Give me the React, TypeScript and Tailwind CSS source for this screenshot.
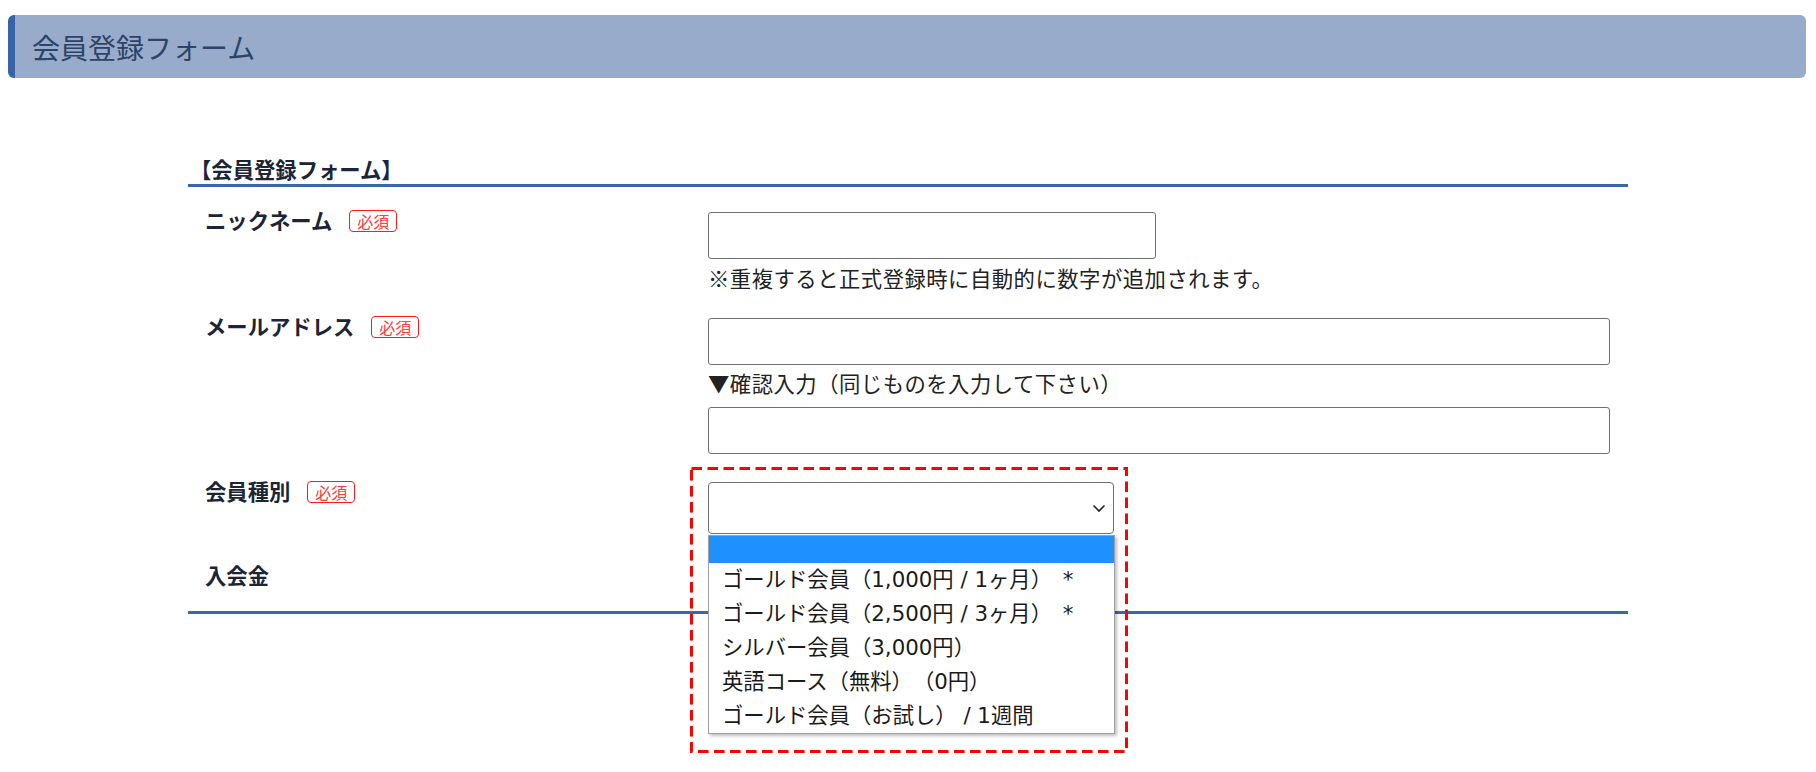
import React from 'react';

// Membership plans shown in the open select list
const plans = [
  'ゴールド会員（1,000円 / 1ヶ月）\u2002*',
  'ゴールド会員（2,500円 / 3ヶ月）\u2002*',
  'シルバー会員（3,000円）',
  '英語コース（無料）（0円）',
  'ゴールド会員（お試し） / 1週間',
];

const Required: React.FC = () => (
  <span className="ml-[17px] inline-flex h-[22px] translate-y-[1px] items-center rounded-[4px] border-[1.5px] border-[#ff1a1a] px-[7px] text-[16px] font-normal leading-none text-[#ff3b3b]">
    必須
  </span>
);

const Label: React.FC<{ text: string; required?: boolean }> = ({ text, required }) => (
  <div className="-mt-[3px] flex w-[520px] shrink-0 items-center self-start pl-[17px]">
    <span className="text-[21.33px] font-bold leading-[18px] text-[#1b2537]">{text}</span>
    {required && <Required />}
  </div>
);

const TextInput: React.FC<{ className?: string }> = ({ className }) => (
  <input
    type="text"
    className={`block h-[47px] rounded-[3px] border border-[#6f6f6f] bg-white px-2 text-[21.33px] outline-none ${className ?? ''}`}
  />
);

const MemberSelect: React.FC = () => (
  <div className="relative w-[406px]">
    <div className="flex h-[52px] items-center justify-end rounded-[4px] border border-[#6f6f6f] bg-white pr-[7px]">
      <svg width="14" height="9" viewBox="0 0 14 9" fill="none">
        <path d="M1.5 1.5 L7 7 L12.5 1.5" stroke="#222" strokeWidth="1.6" />
      </svg>
    </div>

    {/* open option list */}
    <div className="absolute left-0 top-[53px] z-10 w-[407px] border border-[#a0a0a0] bg-white font-['DejaVu_Sans','Noto_Sans_CJK_JP',sans-serif] shadow-[2px_2px_3px_rgba(0,0,0,0.25)]">
      <div className="h-[27px] bg-[#1e90ff]" />
      {plans.map((p) => (
        <div key={p} className="h-[34px] whitespace-pre pl-[13px] text-[21.33px] leading-[34px] text-[#1a1a1a]">
          {p}
        </div>
      ))}
    </div>

    {/* red dashed annotation */}
    <svg className="pointer-events-none absolute -left-[18px] -top-[15px] z-20" width="438" height="286">
      <rect
        x="1.5"
        y="1.5"
        width="435"
        height="283"
        fill="none"
        stroke="#ff0000"
        strokeWidth="3"
        strokeDasharray="10.5 5.5"
      />
    </svg>
  </div>
);

export default function App() {
  return (
    <div className="min-h-screen bg-white font-['Noto_Sans_CJK_JP','Noto_Sans',sans-serif] [text-spacing-trim:space-all]">
      {/* page title */}
      <div className="ml-[8px] mr-[10px] pt-[15px]">
        <div className="flex h-[63px] items-center rounded-[6px] border-l-[7px] border-[#3863a6] bg-[#98abcb] pl-[17px]">
          <h1 className="text-[28px] font-normal leading-none text-[#2b4468]">会員登録フォーム</h1>
        </div>
      </div>

      <div className="mx-auto mt-[75px] w-[1440px]">
        <h2 className="border-b-[3px] border-[#3a67a8] pl-[2px] text-[21.33px] font-bold leading-[31px] text-[#1b2537]">
          【会員登録フォーム】
        </h2>

        {/* nickname */}
        <div className="flex items-start pt-[25px]">
          <Label text="ニックネーム" required />
          <div>
            <TextInput className="w-[448px]" />
            <p className="mt-[3px] text-[21.33px] leading-[32px] tracking-[0.5px] text-[#222]">
              ※重複すると正式登録時に自動的に数字が追加されます。
            </p>
          </div>
        </div>

        {/* email */}
        <div className="flex items-start pt-[24px]">
          <Label text="メールアドレス" required />
          <div>
            <TextInput className="w-[902px]" />
            <p className="mt-[2px] text-[21.33px] leading-[32px] tracking-[0.5px] text-[#222]">
              ▼確認入力（同じものを入力して下さい）
            </p>
            <TextInput className="mt-[8px] w-[902px]" />
          </div>
        </div>

        {/* member type */}
        <div className="flex items-start pt-[28px]">
          <div className="pt-[1px]">
            <Label text="会員種別" required />
          </div>
          <MemberSelect />
        </div>

        {/* entry fee */}
        <div className="flex items-start border-b-[3px] border-[#3a67a8] pb-[27px] pt-[35px]">
          <Label text="入会金" />
        </div>
      </div>
    </div>
  );
}
